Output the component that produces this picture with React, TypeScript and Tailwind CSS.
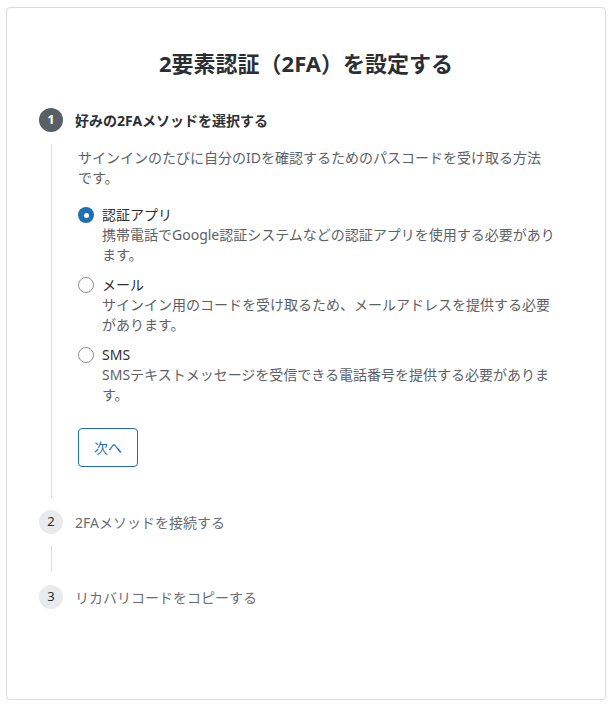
import { useState } from 'react';

const methods = [
  {
    id: 'app',
    label: '認証アプリ',
    desc: '携帯電話でGoogle認証システムなどの認証アプリを使用する必要があります。',
  },
  {
    id: 'mail',
    label: 'メール',
    desc: 'サインイン用のコードを受け取るため、メールアドレスを提供する必要があります。',
  },
  {
    id: 'sms',
    label: 'SMS',
    desc: 'SMSテキストメッセージを受信できる電話番号を提供する必要があります。',
  },
];

function Radio({ checked }: { checked: boolean }) {
  if (checked) {
    return (
      <span className="flex h-4 w-4 shrink-0 items-center justify-center rounded-full bg-[#1e6fb6]">
        <span className="h-[5px] w-[5px] rounded-full bg-white" />
      </span>
    );
  }
  return <span className="h-4 w-4 shrink-0 rounded-full border border-[#8c9095] bg-white" />;
}

export default function App() {
  const [selected, setSelected] = useState('app');

  return (
    <div
      className="min-h-[705px] bg-white pl-[6px] pt-[7px]"
      style={{ fontFamily: '"Noto Sans", "Noto Sans CJK JP", sans-serif' }}
    >
      <div className="h-[693px] w-[600px] rounded-[4px] border border-[#dcdcdc] bg-white px-8 pt-[39px]">
        <h1 className="text-center text-[22px] font-bold leading-8 text-[#2b2f33]">
          2要素認証（2FA）を設定する
        </h1>

        <div className="mt-[29px]">
          {/* Step 1 */}
          <div className="flex items-center">
            <span className="flex h-6 w-6 items-center justify-center rounded-full bg-[#585f66] text-[13px] font-bold text-white">
              1
            </span>
            <span className="ml-3 text-[14px] font-bold text-[#2b2f33]">好みの2FAメソッドを選択する</span>
          </div>
          <div className="flex">
            <div className="my-3 flex w-6 justify-center">
              <div className="w-px bg-[#dddddd]" />
            </div>
            <div className="ml-[15px] w-[464px] pb-[43px] pt-4">
              <p className="w-[470px] text-[14px] leading-5 text-[#5d6166]">
                サインインのたびに自分のIDを確認するためのパスコードを受け取る方法です。
              </p>
              <div className="mt-[17px] flex w-[480px] flex-col gap-[10px]">
                {methods.map((m) => (
                  <label key={m.id} className="flex cursor-pointer gap-2" onClick={() => setSelected(m.id)}>
                    <span className="flex h-5 items-center">
                      <Radio checked={selected === m.id} />
                    </span>
                    <span className="flex flex-col">
                      <span className="text-[14px] leading-5 text-[#2b2f33]">{m.label}</span>
                      <span className="text-[14px] leading-5 text-[#5d6166]">{m.desc}</span>
                    </span>
                  </label>
                ))}
              </div>
              <button className="mt-[23px] h-[39px] w-[60px] rounded-[4px] border border-[#1e6fb6] text-[14px] text-[#1e6fb6]">
                次へ
              </button>
            </div>
          </div>

          {/* Step 2 */}
          <div className="flex items-center">
            <span className="flex h-6 w-6 items-center justify-center rounded-full bg-[#e9eaec] text-[13px] text-[#2b2f33]">
              2
            </span>
            <span className="ml-3 text-[14px] text-[#6a6e73]">2FAメソッドを接続する</span>
          </div>
          <div className="flex">
            <div className="my-3 flex h-[25px] w-6 justify-center">
              <div className="w-px bg-[#dddddd]" />
            </div>
          </div>

          {/* Step 3 */}
          <div className="mt-[2px] flex items-center">
            <span className="flex h-6 w-6 items-center justify-center rounded-full bg-[#e9eaec] text-[13px] text-[#2b2f33]">
              3
            </span>
            <span className="ml-3 text-[14px] text-[#6a6e73]">リカバリコードをコピーする</span>
          </div>
        </div>
      </div>
    </div>
  );
}
